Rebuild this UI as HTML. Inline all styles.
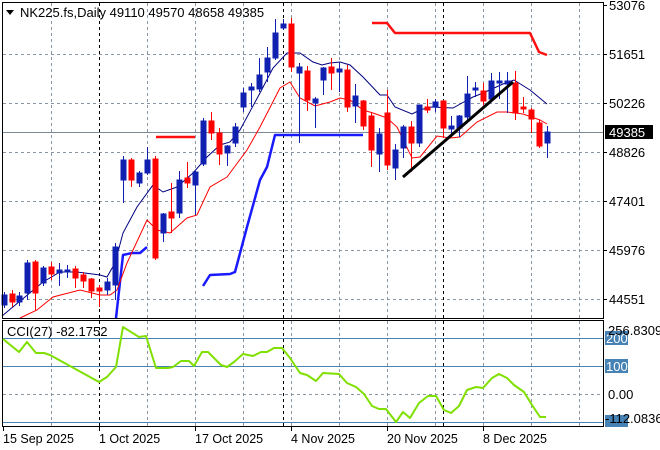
<!DOCTYPE html>
<html><head><meta charset="utf-8"><style>
html,body{margin:0;padding:0;background:#fff;width:660px;height:450px;overflow:hidden}
svg{display:block;font-family:"Liberation Sans",sans-serif}
</style></head><body>
<svg width="660" height="450" viewBox="0 0 660 450" xmlns="http://www.w3.org/2000/svg">
<rect width="660" height="450" fill="#fff"/>
<g stroke="#8a96a4" stroke-width="1" stroke-dasharray="3,3" fill="none">
<line x1="3" y1="54.5" x2="603" y2="54.5"/><line x1="3" y1="103.5" x2="603" y2="103.5"/><line x1="3" y1="152.5" x2="603" y2="152.5"/><line x1="3" y1="201.5" x2="603" y2="201.5"/><line x1="3" y1="250.5" x2="603" y2="250.5"/><line x1="3" y1="299.5" x2="603" y2="299.5"/>
<line x1="51.5" y1="3" x2="51.5" y2="426"/><line x1="147.5" y1="3" x2="147.5" y2="426"/><line x1="195.5" y1="3" x2="195.5" y2="426"/><line x1="243.5" y1="3" x2="243.5" y2="426"/><line x1="291.5" y1="3" x2="291.5" y2="426"/><line x1="339.5" y1="3" x2="339.5" y2="426"/><line x1="387.5" y1="3" x2="387.5" y2="426"/><line x1="435.5" y1="3" x2="435.5" y2="426"/><line x1="483.5" y1="3" x2="483.5" y2="426"/><line x1="531.5" y1="3" x2="531.5" y2="426"/><line x1="579.5" y1="3" x2="579.5" y2="426"/>
<line x1="3" y1="394.5" x2="603" y2="394.5"/>
</g>
<g stroke="#000" stroke-width="1" stroke-dasharray="3,3">
<line x1="99.5" y1="3" x2="99.5" y2="426"/><line x1="283.5" y1="3" x2="283.5" y2="426"/><line x1="443.5" y1="3" x2="443.5" y2="426"/>
</g>
<line x1="3" y1="132.5" x2="603" y2="132.5" stroke="#7c8a98"/>
<g fill="none" stroke-width="2.5" stroke-linejoin="round">
<polyline stroke="#1a1aff" points="116,318 123,255 132,253 140,253 147,247"/>
<polyline stroke="#1a1aff" points="203,286 210,275 230,274 235,272 247,227 260,180 267,167 275,135 283,135 363,135"/>
<polyline stroke="#ff1010" points="156,137 195,137"/>
<polyline stroke="#ff1010" points="372,23 387,23 395,33 530,33 539,52 547,55"/>
</g>
<polyline fill="none" stroke="#000080" stroke-width="1" points="2,316 43,282 60,272 77,272 100,275 107,277 115,263 123,233 137,207 153,185 163,192 177,187 193,173 207,157 220,145 230,142 240,130 260,93 273,68 287,53 300,53 313,62 322,65 330,63 340,62 350,65 363,77 380,95 387,95 395,107 412,114 420,110 430,107 453,108 462,103 473,97 483,93 503,84 514,80 530,90 547,104"/>
<polyline fill="none" stroke="#ff0000" stroke-width="1" points="20,318 37,310 53,297 80,290 100,295 110,295 117,290 127,263 147,220 157,230 170,233 187,218 197,215 210,187 227,177 247,150 260,127 280,88 290,82 300,98 315,106 330,102 340,98 350,100 363,110 373,113 387,118 397,127 412,158 420,157 437,136 450,138 460,137 477,122 497,112 507,112 523,114 540,120 547,124"/>
<g stroke-width="1">
<g stroke="#1020b0" fill="#1020b0">
<line x1="4.5" y1="292" x2="4.5" y2="308"/><rect x="2" y="295" width="5" height="10"/>
<line x1="19.5" y1="292" x2="19.5" y2="306"/><rect x="17" y="296" width="5" height="6"/>
<line x1="27.5" y1="260" x2="27.5" y2="300"/><rect x="25" y="263" width="5" height="30"/>
<line x1="43.5" y1="266" x2="43.5" y2="286"/><rect x="41" y="268" width="5" height="15"/>
<line x1="59.5" y1="263" x2="59.5" y2="286"/><rect x="57" y="270" width="5" height="3"/>
<line x1="67.5" y1="265" x2="67.5" y2="278"/><rect x="65" y="270" width="5" height="2"/>
<line x1="107.5" y1="278" x2="107.5" y2="295"/><rect x="105" y="282" width="5" height="8"/>
<line x1="115.5" y1="243" x2="115.5" y2="300"/><rect x="113" y="247" width="5" height="38"/>
<line x1="123.5" y1="156" x2="123.5" y2="203"/><rect x="121" y="160" width="5" height="20"/>
<line x1="139.5" y1="171" x2="139.5" y2="187"/><rect x="137" y="173" width="5" height="10"/>
<line x1="147.5" y1="147" x2="147.5" y2="175"/><rect x="145" y="160" width="5" height="13"/>
<line x1="163.5" y1="213" x2="163.5" y2="242"/><rect x="161" y="214" width="5" height="19"/>
<line x1="179.5" y1="171" x2="179.5" y2="218"/><rect x="177" y="180" width="5" height="33"/>
<line x1="195.5" y1="171" x2="195.5" y2="215"/><rect x="193" y="172" width="5" height="13"/>
<line x1="203.5" y1="118" x2="203.5" y2="166"/><rect x="201" y="121" width="5" height="43"/>
<line x1="227.5" y1="145" x2="227.5" y2="166"/><rect x="225" y="146" width="5" height="7"/>
<line x1="235.5" y1="123" x2="235.5" y2="147"/><rect x="233" y="127" width="5" height="16"/>
<line x1="243.5" y1="88" x2="243.5" y2="112"/><rect x="241" y="93" width="5" height="14"/>
<line x1="251.5" y1="83" x2="251.5" y2="107"/><rect x="249" y="87" width="5" height="3"/>
<line x1="259.5" y1="58" x2="259.5" y2="92"/><rect x="257" y="75" width="5" height="14"/>
<line x1="267.5" y1="47" x2="267.5" y2="82"/><rect x="265" y="58" width="5" height="14"/>
<line x1="275.5" y1="19" x2="275.5" y2="60"/><rect x="273" y="33" width="5" height="25"/>
<line x1="283.5" y1="19" x2="283.5" y2="30"/><rect x="281" y="24" width="5" height="4"/>
<line x1="299.5" y1="63" x2="299.5" y2="143"/><rect x="297" y="67" width="5" height="6"/>
<line x1="315.5" y1="97" x2="315.5" y2="128"/><rect x="313" y="99" width="5" height="4"/>
<line x1="323.5" y1="67" x2="323.5" y2="95"/><rect x="321" y="68" width="5" height="12"/>
<line x1="339.5" y1="62" x2="339.5" y2="92"/><rect x="337" y="69" width="5" height="3"/>
<line x1="355.5" y1="84" x2="355.5" y2="123"/><rect x="353" y="96" width="5" height="10"/>
<line x1="379.5" y1="128" x2="379.5" y2="172"/><rect x="377" y="134" width="5" height="20"/>
<line x1="395.5" y1="144" x2="395.5" y2="180"/><rect x="393" y="150" width="5" height="18"/>
<line x1="403.5" y1="125" x2="403.5" y2="158"/><rect x="401" y="127" width="5" height="21"/>
<line x1="419.5" y1="105" x2="419.5" y2="147"/><rect x="417" y="105" width="5" height="38"/>
<line x1="435.5" y1="99" x2="435.5" y2="112"/><rect x="433" y="102" width="5" height="5"/>
<line x1="451.5" y1="116" x2="451.5" y2="137"/><rect x="449" y="126" width="5" height="3"/>
<line x1="459.5" y1="115" x2="459.5" y2="137"/><rect x="457" y="116" width="5" height="12"/>
<line x1="467.5" y1="76" x2="467.5" y2="120"/><rect x="465" y="94" width="5" height="23"/>
<line x1="475.5" y1="82" x2="475.5" y2="97"/><rect x="473" y="88" width="5" height="2"/>
<line x1="491.5" y1="73" x2="491.5" y2="101"/><rect x="489" y="81" width="5" height="18"/>
<line x1="499.5" y1="72" x2="499.5" y2="99"/><rect x="497" y="81" width="5" height="2"/>
<line x1="507.5" y1="72" x2="507.5" y2="113"/><rect x="505" y="81" width="5" height="3"/>
<line x1="547.5" y1="126" x2="547.5" y2="158"/><rect x="545" y="132" width="5" height="11"/>
</g>
<g stroke="#ff0000" fill="#ff0000">
<line x1="12.5" y1="290" x2="12.5" y2="307"/><rect x="10" y="294" width="5" height="8"/>
<line x1="35.5" y1="260" x2="35.5" y2="310"/><rect x="33" y="262" width="5" height="31"/>
<line x1="51.5" y1="262" x2="51.5" y2="280"/><rect x="49" y="267" width="5" height="7"/>
<line x1="75.5" y1="266" x2="75.5" y2="288"/><rect x="73" y="269" width="5" height="9"/>
<line x1="83.5" y1="272" x2="83.5" y2="288"/><rect x="81" y="275" width="5" height="6"/>
<line x1="91.5" y1="278" x2="91.5" y2="298"/><rect x="89" y="279" width="5" height="12"/>
<line x1="99.5" y1="285" x2="99.5" y2="307"/><rect x="97" y="288" width="5" height="3"/>
<line x1="131.5" y1="158" x2="131.5" y2="187"/><rect x="129" y="160" width="5" height="20"/>
<line x1="155.5" y1="156" x2="155.5" y2="260"/><rect x="153" y="159" width="5" height="99"/>
<line x1="171.5" y1="183" x2="171.5" y2="233"/><rect x="169" y="212" width="5" height="6"/>
<line x1="187.5" y1="162" x2="187.5" y2="188"/><rect x="185" y="178" width="5" height="5"/>
<line x1="211.5" y1="112" x2="211.5" y2="140"/><rect x="209" y="121" width="5" height="12"/>
<line x1="219.5" y1="128" x2="219.5" y2="165"/><rect x="217" y="133" width="5" height="21"/>
<line x1="291.5" y1="18" x2="291.5" y2="72"/><rect x="289" y="24" width="5" height="43"/>
<line x1="307.5" y1="66" x2="307.5" y2="111"/><rect x="305" y="71" width="5" height="29"/>
<line x1="331.5" y1="58" x2="331.5" y2="90"/><rect x="329" y="67" width="5" height="6"/>
<line x1="347.5" y1="65" x2="347.5" y2="112"/><rect x="345" y="70" width="5" height="37"/>
<line x1="363.5" y1="100" x2="363.5" y2="130"/><rect x="361" y="101" width="5" height="25"/>
<line x1="371.5" y1="112" x2="371.5" y2="167"/><rect x="369" y="116" width="5" height="34"/>
<line x1="387.5" y1="90" x2="387.5" y2="170"/><rect x="385" y="113" width="5" height="52"/>
<line x1="411.5" y1="121" x2="411.5" y2="172"/><rect x="409" y="127" width="5" height="16"/>
<line x1="427.5" y1="99" x2="427.5" y2="113"/><rect x="425" y="107" width="5" height="3"/>
<line x1="443.5" y1="100" x2="443.5" y2="138"/><rect x="441" y="101" width="5" height="27"/>
<line x1="483.5" y1="83" x2="483.5" y2="105"/><rect x="481" y="91" width="5" height="10"/>
<line x1="515.5" y1="71" x2="515.5" y2="120"/><rect x="513" y="83" width="5" height="30"/>
<line x1="523.5" y1="97" x2="523.5" y2="113"/><rect x="521" y="107" width="5" height="2"/>
<line x1="531.5" y1="108" x2="531.5" y2="133"/><rect x="529" y="110" width="5" height="9"/>
<line x1="539.5" y1="120" x2="539.5" y2="148"/><rect x="537" y="123" width="5" height="23"/>
</g>
</g>
<line x1="403" y1="177" x2="513" y2="82" stroke="#000" stroke-width="3"/>
<rect x="2.5" y="2.5" width="601" height="316" fill="none" stroke="#000"/>
<rect x="2.5" y="320.5" width="601" height="106" fill="none" stroke="#000"/>
<polygon points="6,10 14,10 10,15" fill="#000"/>
<text x="20" y="17" font-size="13" fill="#000">NK225.fs,Daily  49110 49570 48658 49385</text>
<g font-size="13" fill="#000">
<text x="609" y="10">53076</text><text x="609" y="59">51651</text><text x="609" y="108">50226</text><text x="609" y="157">48826</text><text x="609" y="206">47401</text><text x="609" y="255">45976</text><text x="609" y="304">44551</text>
</g>
<g stroke="#000"><line x1="603" y1="5.5" x2="607" y2="5.5"/><line x1="603" y1="54.5" x2="607" y2="54.5"/><line x1="603" y1="103.5" x2="607" y2="103.5"/><line x1="603" y1="152.5" x2="607" y2="152.5"/><line x1="603" y1="201.5" x2="607" y2="201.5"/><line x1="603" y1="250.5" x2="607" y2="250.5"/><line x1="603" y1="299.5" x2="607" y2="299.5"/></g>
<rect x="605" y="125" width="48" height="14" fill="#000"/>
<text x="609" y="137" font-size="13" fill="#fff">49385</text>
<g stroke="#4682b4" stroke-width="1"><line x1="3" y1="338.5" x2="603" y2="338.5"/><line x1="3" y1="366.5" x2="603" y2="366.5"/><line x1="3" y1="422.5" x2="603" y2="422.5"/></g>
<polyline fill="none" stroke="#7fe000" stroke-width="2" stroke-linejoin="round" points="3,339 19,352 27,342 36,353 44,353 50,355 99,382 107,377 116,367 123,327 139,337 146,336 156,368 168,368 173,367 181,361 189,361 194,366 202,352 208,352 221,365 227,367 234,362 243,354 253,356 261,352 267,352 274,348 282,348 290,358 300,373 307,375 316,381 323,373 339,374 347,383 356,387 364,394 372,406 379,409 386,409 396,422 403,412 410,418 419,403 428,396 436,396 444,410 451,413 459,406 467,390 476,387 483,388 492,378 499,374 507,378 514,385 524,392 532,405 540,417 546,417"/>
<text x="7" y="336" font-size="13" fill="#000">CCI(27) -82.1752</text>
<rect x="605" y="331" width="23" height="14" fill="#4682b4"/>
<rect x="605" y="359" width="23" height="14" fill="#4682b4"/>
<rect x="605" y="415" width="23" height="12" fill="#4682b4"/>
<g font-size="13">
<text x="606" y="343" fill="#fff">200</text>
<text x="606" y="371" fill="#fff">100</text>
<text x="608" y="335" fill="#000">256.8309</text>
<text x="608" y="399" fill="#000">0.00</text>
<text x="605" y="423" fill="#000">-112.0836</text>
</g>
<g stroke="#000"><line x1="3.5" y1="427" x2="3.5" y2="431"/><line x1="99.5" y1="427" x2="99.5" y2="431"/><line x1="195.5" y1="427" x2="195.5" y2="431"/><line x1="291.5" y1="427" x2="291.5" y2="431"/><line x1="387.5" y1="427" x2="387.5" y2="431"/><line x1="483.5" y1="427" x2="483.5" y2="431"/></g>
<g font-size="12.5" fill="#000">
<text x="3" y="443">15 Sep 2025</text><text x="99" y="443">1 Oct 2025</text><text x="195" y="443">17 Oct 2025</text><text x="291" y="443">4 Nov 2025</text><text x="387" y="443">20 Nov 2025</text><text x="483" y="443">8 Dec 2025</text>
</g>
</svg>
</body></html>
